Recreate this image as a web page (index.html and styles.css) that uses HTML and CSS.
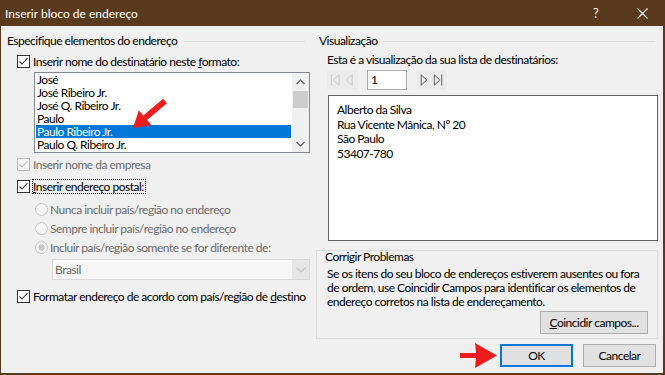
FILE: index.html
```html
<!DOCTYPE html>
<html lang="pt-BR">
<head>
<meta charset="utf-8">
<title>Inserir bloco de endereço</title>
<link rel="stylesheet" href="styles.css">
</head>
<body>
<div class="window">
  <div class="titlebar">
    <span class="title">Inserir bloco de endereço</span>
    <span class="tb-btn help">?</span>
    <span class="tb-btn close"><svg width="11" height="11" viewBox="0 0 11 11"><path d="M0.5 0.5L10.5 10.5M10.5 0.5L0.5 10.5" stroke="#fff" stroke-width="1.1"/></svg></span>
  </div>
  <div class="client">
    <div class="left">
      <div class="group-head"><span>Especifique elementos do endereço</span><i class="rule"></i></div>

      <div class="check row-name">
        <span class="box"><svg width="11" height="11" viewBox="0 0 11 11"><path d="M1.5 5.5L4 8L9.5 2" fill="none" stroke="#333" stroke-width="1.1"/></svg></span>
        <span>Inserir nome do destinatário neste <u>f</u>ormato:</span>
      </div>

      <div class="listbox">
        <ul class="items">
          <li>José</li>
          <li>José Ribeiro Jr.</li>
          <li>José Q. Ribeiro Jr.</li>
          <li>Paulo</li>
          <li class="selected">Paulo Ribeiro Jr.</li>
          <li>Paulo Q. Ribeiro Jr.</li>
        </ul>
        <div class="scrollbar">
          <span class="sb-btn"><svg width="9" height="6" viewBox="0 0 9 6"><path d="M0.5 5L4.5 1L8.5 5" fill="none" stroke="#606060" stroke-width="1.2"/></svg></span>
          <span class="sb-thumb"></span>
          <span class="sb-track"></span>
          <span class="sb-btn"><svg width="9" height="6" viewBox="0 0 9 6"><path d="M0.5 1L4.5 5L8.5 1" fill="none" stroke="#606060" stroke-width="1.2"/></svg></span>
        </div>
      </div>

      <div class="check disabled row-company">
        <span class="box"><svg width="11" height="11" viewBox="0 0 11 11"><path d="M1.5 5.5L4 8L9.5 2" fill="none" stroke="#bcbcbc" stroke-width="1.1"/></svg></span>
        <span>Inserir nome da empresa</span>
      </div>

      <div class="check row-postal">
        <span class="box"><svg width="11" height="11" viewBox="0 0 11 11"><path d="M1.5 5.5L4 8L9.5 2" fill="none" stroke="#333" stroke-width="1.1"/></svg></span>
        <span class="focus"><u>I</u>nserir endereço postal:</span>
      </div>

      <div class="radio disabled first">
        <svg width="13" height="13" viewBox="0 0 13 13"><circle cx="6.5" cy="6.5" r="6" fill="#f7f7f7" stroke="#c4c4c4"/></svg>
        <span>Nunca incluir país/região no endereço</span>
      </div>
      <div class="radio disabled">
        <svg width="13" height="13" viewBox="0 0 13 13"><circle cx="6.5" cy="6.5" r="6" fill="#f7f7f7" stroke="#c4c4c4"/></svg>
        <span>Sempre incluir país/região no endereço</span>
      </div>
      <div class="radio disabled">
        <svg width="13" height="13" viewBox="0 0 13 13"><circle cx="6.5" cy="6.5" r="6" fill="#f7f7f7" stroke="#c4c4c4"/><circle cx="6.5" cy="6.5" r="3" fill="#c4c4c4"/></svg>
        <span>Incluir país/região somente se for diferente de:</span>
      </div>

      <div class="combo">
        <span class="combo-text">Brasil</span>
        <span class="combo-btn"><svg width="10" height="6" viewBox="0 0 10 6"><path d="M0.5 0.5L5 5L9.5 0.5" fill="none" stroke="#c4c4c4" stroke-width="1.1"/></svg></span>
      </div>

      <div class="check row-format">
        <span class="box"><svg width="11" height="11" viewBox="0 0 11 11"><path d="M1.5 5.5L4 8L9.5 2" fill="none" stroke="#333" stroke-width="1.1"/></svg></span>
        <span>Formatar endereço de acordo com país/região de <u>d</u>estino</span>
      </div>
    </div>

    <div class="right">
      <div class="group-head"><span>Visualização</span><i class="rule"></i></div>
      <div class="preview-caption">Esta é a visualização da sua lista de destinatários:</div>
      <div class="nav">
        <span class="nav-group off">
          <svg width="15" height="14" viewBox="0 0 15 14"><path d="M3.5 1v12" stroke="#c8c8c8"/><path d="M11.5 1.5L5.5 7L11.5 12.5Z" fill="none" stroke="#c8c8c8"/></svg>
          <svg width="15" height="14" viewBox="0 0 15 14"><path d="M9.5 1.5L3.5 7L9.5 12.5Z" fill="none" stroke="#c8c8c8"/></svg>
        </span>
        <span class="nav-input">1</span>
        <span class="nav-group on">
          <svg width="15" height="14" viewBox="0 0 15 14"><path d="M4.5 1.5L10.5 7L4.5 12.5Z" fill="none" stroke="#555"/></svg>
          <svg width="15" height="14" viewBox="0 0 15 14"><path d="M3.5 1.5L9.5 7L3.5 12.5Z" fill="none" stroke="#555"/><path d="M11.5 1v12" stroke="#555"/></svg>
        </span>
      </div>
      <div class="preview">
        <div>Alberto da Silva</div>
        <div>Rua Vicente Mânica, Nº 20</div>
        <div>São Paulo</div>
        <div>53407-780</div>
      </div>
      <div class="fix-group">
        <div class="fix-label">Corrigir Problemas</div>
        <p class="fix-text">Se os itens do seu bloco de endereços estiverem ausentes ou fora de ordem, use Coincidir Campos para identificar os elementos de endereço corretos na lista de endereçamento.</p>
        <div class="fix-actions"><button class="btn match"><u>C</u>oincidir campos...</button></div>
      </div>
      <div class="dialog-actions">
        <button class="btn default">OK</button>
        <button class="btn">Cancelar</button>
      </div>
    </div>
  </div>

  <svg class="annotations" width="665" height="375" viewBox="0 0 665 375">
    <polygon fill="#ee1c1c" points="166.9,103.3 147.1,120.0 151.5,125.2 133,128 138.8,110.3 143.3,115.4 163.1,98.7"/>
    <polygon fill="#ee1c1c" points="460,353 476,353 475,343 497,355.5 475,368 476,358 460,358"/>
  </svg>
</div>
</body>
</html>
```

FILE: styles.css
```css
* { box-sizing: border-box; }

body {
  margin: 0;
  background: #5a3a1c;
  font-family: Lato, "Noto Sans", sans-serif;
  font-size: 12px;
  color: #000;
}

.window {
  position: relative;
  width: 665px;
  height: 375px;
  background: #5a3a1c;
  display: flex;
  flex-direction: column;
}

.titlebar {
  height: 26px;
  display: flex;
  align-items: center;
  color: #fff;
}
.title { flex: 1; padding-left: 5px; }
.tb-btn {
  width: 46px;
  height: 26px;
  display: flex;
  align-items: center;
  justify-content: center;
}
.help { font-size: 13px; }

.client {
  flex: 1;
  margin: 0 2px 2px 1px;
  background: #f0f0f0;
  display: grid;
  grid-template-columns: 311px 351px;
  letter-spacing: -0.5px;
}

.group-head {
  align-self: stretch;
  display: flex;
  align-items: center;
  height: 14px;
  line-height: 14px;
  white-space: nowrap;
}
.group-head .rule {
  flex: 1;
  border-top: 1px solid #dcdcdc;
  margin-left: 6px;
}

/* left column */
.left {
  padding: 8px 0 0 6px;
  display: flex;
  flex-direction: column;
  align-items: flex-start;
}
.left .group-head { margin-right: 7px; }

.check, .radio {
  display: flex;
  align-items: center;
  height: 14px;
  white-space: nowrap;
}
.box {
  width: 13px;
  height: 13px;
  border: 1px solid #333;
  background: #fff;
  margin-right: 3px;
  display: flex;
}
.check.disabled .box { border-color: #bcbcbc; background: #f7f7f7; }
.disabled { color: #6d6d6d; }

.row-name { margin: 6px 0 0 10px; }
.row-company { margin: 4px 0 0 10px; }
.row-postal { margin: 8px 0 0 10px; height: 15px; }
.row-postal .box { margin-right: 2px; }
.focus {
  border: 1px dotted #000;
  line-height: 13px;
  padding-right: 1px;
}
.row-format { margin: 9px 0 0 10px; }

.listbox {
  margin: 4px 0 0 27px;
  width: 276px;
  height: 81px;
  border: 1px solid #828790;
  background: #fff;
  display: flex;
}
.items {
  flex: 1;
  list-style: none;
  margin: 0;
  padding: 0 1px;
}
.items li {
  height: 13px;
  line-height: 13px;
  padding-left: 1px;
  white-space: nowrap;
}
.items li.selected { background: #0078d7; color: #fff; }

.scrollbar {
  width: 17px;
  background: #f0f0f0;
  display: flex;
  flex-direction: column;
  align-items: center;
}
.sb-btn {
  width: 17px;
  height: 17px;
  display: flex;
  align-items: center;
  justify-content: center;
}
.sb-thumb {
  width: 15px;
  height: 17px;
  margin-top: 1px;
  background: #cdcdcd;
}
.sb-track { flex: 1; }

.radio { margin: 5px 0 0 28px; }
.radio.first { margin-top: 8px; }
.radio svg { margin-right: 2px; }

.combo {
  margin: 5px 0 0 45px;
  width: 258px;
  height: 21px;
  border: 1px solid #d9d9d9;
  background: #f7f7f7;
  display: flex;
  align-items: center;
  color: #6d6d6d;
}
.combo-text { flex: 1; padding-left: 2px; }
.combo-btn {
  width: 17px;
  height: 19px;
  background: #e6e6e6;
  display: flex;
  align-items: center;
  justify-content: center;
}

/* right column */
.right {
  padding: 8px 6px 0 0;
  display: flex;
  flex-direction: column;
  align-items: flex-start;
}
.right .group-head { padding-left: 7px; margin-right: 2px; }

.preview-caption {
  margin: 5px 0 0 15px;
  height: 14px;
  line-height: 14px;
  white-space: nowrap;
}

.nav {
  margin: 3px 0 0 15px;
  height: 20px;
  display: flex;
  align-items: center;
}
.nav-group {
  display: flex;
  align-items: center;
  height: 20px;
  background: #ebebeb;
  padding: 0 1px;
}
.nav-group.off { width: 31px; }
.nav-group.on { width: 30px; margin-left: 9px; }
.nav-input {
  margin-left: 9px;
  width: 40px;
  height: 20px;
  border: 1px solid #adadad;
  background: #fff;
  line-height: 18px;
  padding-left: 3px;
}

.preview {
  margin: 5px 0 0 16px;
  width: 330px;
  height: 146px;
  border: 1px solid #646464;
  background: #fff;
  padding: 7px 0 0 8px;
  line-height: 14.5px;
}

.fix-group {
  margin: 9px 0 0 4px;
  width: 342px;
  height: 89px;
  border: 1px solid #dcdcdc;
  display: flex;
  flex-direction: column;
}
.fix-label {
  padding-left: 8px;
  line-height: 12px;
  height: 12px;
  white-space: nowrap;
}
.fix-text {
  margin: 4px 0 0 10px;
  line-height: 14px;
  width: 325px;
}
.fix-actions {
  display: flex;
  justify-content: flex-end;
  margin: 2px 9px 0 0;
}

.btn {
  font: inherit;
  letter-spacing: inherit;
  color: #000;
  height: 23px;
  border: 1px solid #adadad;
  background: #e1e1e1;
  padding: 0;
  margin: 0;
}
.btn.match { width: 108px; }

.dialog-actions {
  align-self: stretch;
  display: flex;
  justify-content: flex-end;
  gap: 10px;
  margin: 5px 1px 0 0;
}
.dialog-actions .btn { width: 73px; }
.btn.default { border: 2px solid #0078d7; }

.annotations {
  position: absolute;
  left: 0;
  top: 0;
  pointer-events: none;
}
```
